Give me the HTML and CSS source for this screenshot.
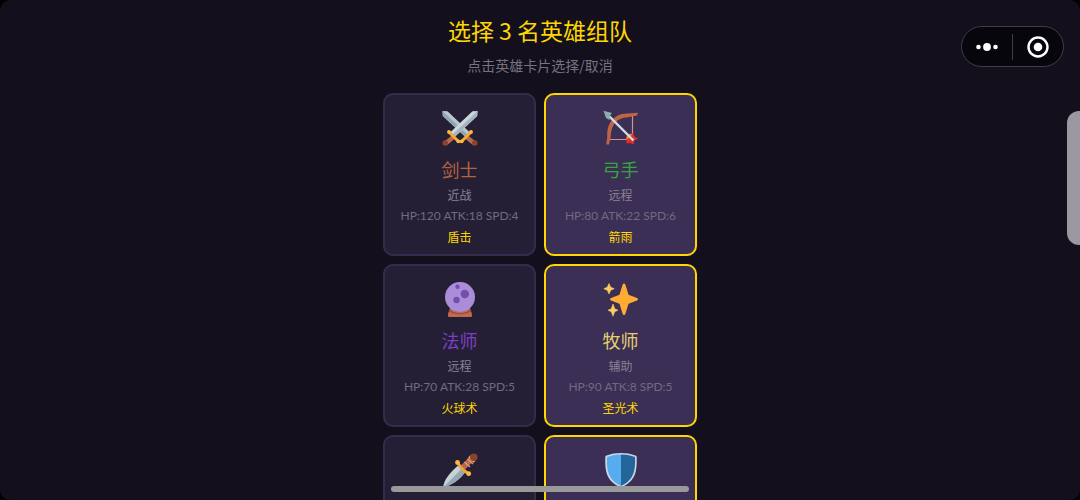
FILE: index.html
```
<!DOCTYPE html>
<html lang="zh-CN">
<head>
  <meta charset="UTF-8" />
  <meta name="viewport" content="width=device-width, initial-scale=1.0"/>
  <title>选择英雄</title>
  <link rel="stylesheet" href="styles.css">
</head>
<body>
  <main class="pantalla">
    <header class="cabecera">
      <h1>选择 3 名英雄组队</h1>
      <p>点击英雄卡片选择/取消</p>
    </header>

    <div class="heroes" id="heroes">
      <button class="heroe espada" type="button" aria-pressed="false">
        <svg class="icono" viewBox="0 0 36 36" aria-hidden="true">
          <path d="M.5 1 5.500 1.300 28.500 23 24 27.500.8 6z" fill="#b9c8d0"/>
          <path d="M.5 1 26.300 25.300 24 27.500.8 6z" fill="#93a7b1"/>
          <path d="m24.500 27 8 6.500" stroke="#b96a4b" stroke-width="4.500"/>
          <path d="M19.500 31.500 29 22" stroke="#f5a836" stroke-width="3" stroke-linecap="round"/>
          <path d="M35.500 1 30.500 1.300 7.500 23 12 27.500 35.200 6z" fill="#ccd8de"/>
          <path d="M35.500 1 9.700 25.300 12 27.500 35.200 6z" fill="#a3b5be"/>
          <path d="m11.500 27-8 6.500" stroke="#b96a4b" stroke-width="4.500"/>
          <path d="M16.500 31.500 7 22" stroke="#f5a836" stroke-width="3" stroke-linecap="round"/>
          <g fill="#ffb742"><circle cx="7" cy="22" r="1.900"/><circle cx="16.300" cy="31.300" r="1.900"/><circle cx="29" cy="22" r="1.900"/><circle cx="19.700" cy="31.300" r="1.900"/></g>
          <circle cx="3.200" cy="33" r="2.800" fill="#8b432d"/><circle cx="32.800" cy="33" r="2.800" fill="#8b432d"/>
        </svg>
        <span class="nombre">剑士</span>
        <span class="tipo">近战</span>
        <span class="datos">HP:120 ATK:18 SPD:4</span>
        <span class="poder">盾击</span>
      </button>

      <button class="heroe arco" type="button" aria-pressed="true">
        <svg class="icono" viewBox="0 0 36 36" aria-hidden="true">
          <path d="M29.500 5v24M5 29.500h24" stroke="#d0958a" stroke-width="1.200" fill="none"/>
          <path d="M3.200 34.500 4.300 27C3.500 13 11 4 24 3.600L35 2.800 34 5.500 25 7.300C14 7.800 8.200 14 7.600 27L6 34.500z" fill="#bf6545"/>
          <path d="m23 27 3-3 4-.5 1.500 3 4 2.500-4 1-1 4.500-3.500-1.500-3.500.5z" fill="#e02f2b"/>
          <path d="m24 29 1.500-3.500 3-1" stroke="#f4862e" stroke-width="2" fill="none"/>
          <path d="m5 5 25.500 25.500" stroke="#cfdde8" stroke-width="2.400"/>
          <path d="m.5.8 8.500 2.200-2 2.500-.5 4.500-3.500-2z" fill="#8bacb0"/>
        </svg>
        <span class="nombre">弓手</span>
        <span class="tipo">远程</span>
        <span class="datos">HP:80 ATK:22 SPD:6</span>
        <span class="poder">箭雨</span>
      </button>

      <button class="heroe magia" type="button" aria-pressed="false">
        <svg class="icono" viewBox="0 0 36 36" aria-hidden="true">
          <path d="M8 27h20c.5 3 2 4 2 7.500 0 1-.5 1.500-1.500 1.500h-21c-1 0-1.500-.5-1.500-1.500C6 31 7.500 30 8 27z" fill="#c1694f"/>
          <path d="M7.500 28.500c6 5 15 5 21 0l.5 2c-7 3.500-15 3.500-22 0z" fill="#924d40"/>
          <circle cx="18" cy="16" r="15" fill="#aa8dd8"/>
          <circle cx="22.800" cy="13" r="4.200" fill="#744eaa"/>
          <circle cx="14.500" cy="19" r="3.200" fill="#744eaa"/>
          <circle cx="15.500" cy="5.800" r="2.200" fill="#744eaa"/>
        </svg>
        <span class="nombre">法师</span>
        <span class="tipo">远程</span>
        <span class="datos">HP:70 ATK:28 SPD:5</span>
        <span class="poder">火球术</span>
      </button>

      <button class="heroe luz" type="button" aria-pressed="true">
        <svg class="icono" viewBox="0 0 36 36" aria-hidden="true">
          <path d="M21 2.500c.8 0 1.200.6 1.500 1.500l3 9.800 8.500 3.200c1.300.5 1.300 2.100 0 2.600l-8.500 3.200-3 9.700c-.3.900-.7 1.500-1.500 1.500s-1.200-.6-1.500-1.500l-3-9.700L8 19.600c-1.300-.5-1.300-2.100 0-2.600l8.500-3.200 3-9.800c.3-.9.700-1.500 1.500-1.500z" fill="#ffac33"/>
          <path d="m6 2.500 1.700 3.700 3.500 1.500-3.500 1.600L6 13l-1.700-3.700L.8 7.700l3.500-1.500zM10 23l1.700 4.700 3.300 1.500-3.300 1.500L10 35.200l-1.700-4.500L5 29.200l3.300-1.500z" fill="#ffcb62" stroke="#ffcb62" stroke-width=".6" stroke-linejoin="round"/>
        </svg>
        <span class="nombre">牧师</span>
        <span class="tipo">辅助</span>
        <span class="datos">HP:90 ATK:8 SPD:5</span>
        <span class="poder">圣光术</span>
      </button>

      <button class="heroe" type="button" aria-pressed="false" aria-label="匕首">
        <svg class="icono" viewBox="0 0 36 36" aria-hidden="true">
          <path d="M1 35.500C2 28 7 21.500 16 13.500L23 20.500C16 29 9 33.500 1 35.500z" fill="#c6d3d9"/>
          <path d="M1 35.500 19.500 17l3.500 3.500C16 29 9 33.500 1 35.500z" fill="#94a9b2"/>
          <path d="m20 16.500 11-11" stroke="#b5694d" stroke-width="6"/>
          <path d="m22.500 10 5.500 5M25.500 7l5.500 5" stroke="#d99e82" stroke-width="1.200"/>
          <path d="m27 4.500 5.500 5.500" stroke="#ef9645" stroke-width="2.500"/>
          <circle cx="31.800" cy="5.200" r="3.800" fill="#87432c"/>
          <path d="m15.500 10.500 3.500 5 3 3 5 3.500" stroke="#f2a33a" stroke-width="3" fill="none" stroke-linejoin="round"/>
          <circle cx="15.500" cy="10.500" r="2.400" fill="#ffb742"/><circle cx="26.700" cy="21.700" r="2.400" fill="#ffb742"/>
        </svg>
      </button>

      <button class="heroe" type="button" aria-pressed="true" aria-label="盾牌">
        <svg class="icono" viewBox="0 0 36 36" aria-hidden="true">
          <path d="M18 1c5 0 10 .8 14.500 2.500.8.300 1.200.8 1.200 1.600C34 19 33 29.500 18 35.500 3 29.500 2 19 2.300 5.100c0-.8.4-1.300 1.200-1.600C8 1.800 13 1 18 1z" fill="#ccd6e5"/>
          <path d="M18 2.500c-4.700 0-9.500.8-14 2.500C3.600 18.500 5 28 18 33.800z" fill="#55acee"/>
          <path d="M18 2.500c4.700 0 9.500.8 14 2.500.4 13.500-1 23-14 28.800z" fill="#226699"/>
        </svg>
      </button>
    </div>
  </main>

  <div class="capsula">
    <button type="button" aria-label="更多">
      <svg viewBox="0 0 24 24" aria-hidden="true">
        <circle cx="3.500" cy="12" r="2.300"/><circle cx="12" cy="12" r="3.900"/><circle cx="20.500" cy="12" r="2.300"/>
      </svg>
    </button>
    <button type="button" aria-label="关闭">
      <svg viewBox="0 0 24 24" aria-hidden="true">
        <circle class="aro" cx="12" cy="12" r="9.500"/><circle cx="12" cy="12" r="4.300"/>
      </svg>
    </button>
  </div>

  <div class="lateral"></div>
  <div class="barra"></div>

  <script>
    // marcar o desmarcar cada héroe
    document.querySelectorAll(".heroe").forEach(carta => {
      carta.addEventListener("click", () => {
        const activa = carta.getAttribute("aria-pressed") === "true";
        const total = document.querySelectorAll('.heroe[aria-pressed="true"]').length;
        if (!activa && total >= 3) return;
        carta.setAttribute("aria-pressed", String(!activa));
      });
    });
  </script>
</body>
</html>
```
FILE: styles.css
```
* { margin: 0; padding: 0; box-sizing: border-box; }

html, body {
  height: 100%;
  font-family: 'Noto Sans CJK SC', sans-serif;
  background: #000;
  color: #fff;
  overflow: hidden;
}

button {
  font: inherit;
  color: inherit;
  cursor: pointer;
}

.pantalla {
  height: 100%;
  overflow: hidden;
  display: flex;
  flex-direction: column;
  align-items: center;
  padding-top: 13px;
  background: #130f1d;
  border-radius: 10px;
}

.cabecera {
  text-align: center;
  margin-bottom: 17px;
}

h1 {
  font-size: 23px;
  line-height: 34px;
  font-weight: 400;
  color: #ffd700;
}

.cabecera p {
  font-size: 14px;
  line-height: 21px;
  margin-top: 8px;
  color: #777280;
}

.heroes {
  display: grid;
  grid-template-columns: repeat(2, 153px);
  grid-auto-rows: 1fr;
  gap: 8px;
}

.heroe {
  display: flex;
  flex-direction: column;
  align-items: center;
  padding: 15px 0 7px;
  background: #251f36;
  border: 2px solid #352c4d;
  border-radius: 10px;
}

.heroe[aria-pressed="true"] {
  background: #3b2f55;
  border-color: #ffd700;
}

.icono {
  width: 36px;
  height: 36px;
}

.nombre {
  font-size: 18px;
  line-height: 26px;
  margin: 10px 0 2px;
}

.espada .nombre { color: #b5633f; }
.arco .nombre { color: #35a63f; }
.magia .nombre { color: #7a3fc4; }
.luz .nombre { color: #e6cf72; }

.tipo, .datos, .poder {
  font-size: 12px;
  line-height: 21px;
}

.tipo { color: #888293; }
.poder { color: #ffd700; }

.datos {
  font-family: Lato, sans-serif;
  color: #716a80;
}

.capsula {
  position: fixed;
  top: 26px;
  right: 16px;
  display: flex;
  padding: 7px 0 6px;
  background: #08060d;
  border: 1px solid #413d49;
  border-radius: 21px;
}

.capsula button {
  display: flex;
  padding: 1px 13px;
  background: none;
  border: none;
}

.capsula button + button {
  border-left: 1px solid #413d49;
}

.capsula svg {
  width: 24px;
  height: 24px;
  fill: #fff;
}

.capsula .aro {
  fill: none;
  stroke: #fff;
  stroke-width: 2.4;
}

.lateral {
  position: fixed;
  top: 111px;
  right: 0;
  width: 13px;
  height: 134px;
  background: #9b98a2;
  border-radius: 12px 0 0 12px;
}

.barra {
  position: fixed;
  left: 50%;
  bottom: 8px;
  transform: translateX(-50%);
  width: 298px;
  height: 6px;
  background: #999;
  border-radius: 3px;
}
```
